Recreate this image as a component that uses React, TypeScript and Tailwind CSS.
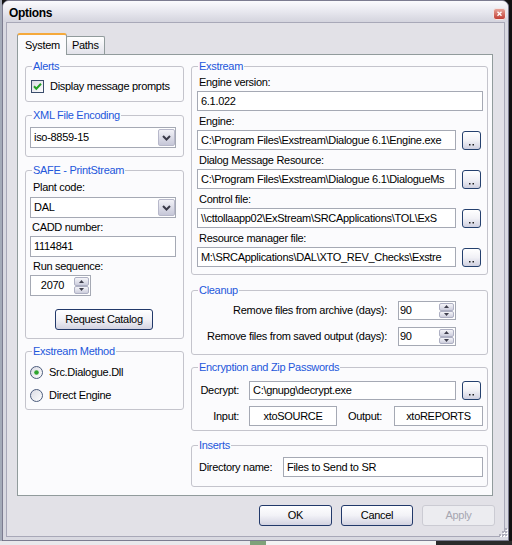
import React from "react";

const F =
  "font-['Liberation_Sans',Arial,sans-serif] text-[11px] tracking-[-0.3px] leading-[13px] text-black";

function Group({
  title,
  className = "",
  children,
}: {
  title: string;
  className?: string;
  children?: React.ReactNode;
}) {
  return (
    <div className={`relative border border-[#C4C4CC] rounded-[3px] ${className}`}>
      <span className="absolute left-[6px] -top-[7px] px-[1px] bg-[#FBFBFD] text-[#2457DB] leading-[13px] whitespace-nowrap">
        {title}
      </span>
      {children}
    </div>
  );
}

function TextBox({
  value,
  className = "",
  center = false,
}: {
  value: string;
  className?: string;
  center?: boolean;
}) {
  return (
    <div
      className={`border border-[#A5A9B4] bg-white flex items-center px-[3px] overflow-hidden whitespace-nowrap ${
        center ? "justify-center" : ""
      } ${className}`}
    >
      {value}
    </div>
  );
}

function Browse() {
  return (
    <div className="w-[19px] h-[19px] shrink-0 rounded-[3px] border border-[#24406E] bg-gradient-to-b from-white via-[#F1F1F6] to-[#CFD0E0] flex items-end justify-center pb-[3px]">
      <svg width="6" height="2" viewBox="0 0 6 2">
        <rect x="0" y="0" width="1.5" height="1.5" fill="#222" />
        <rect x="3.5" y="0" width="1.5" height="1.5" fill="#222" />
      </svg>
    </div>
  );
}

function Combo({ value }: { value: string }) {
  return (
    <div className="h-[21px] w-[146px] border border-[#A5A9B4] bg-white flex items-center">
      <span className="flex-1 pl-[3px] whitespace-nowrap overflow-hidden">{value}</span>
      <div className="w-[17px] h-[17px] rounded-[2px] border border-[#B7B8CA] bg-gradient-to-b from-[#F2F2F7] to-[#C6C7D8] flex items-center justify-center">
        <svg width="9" height="6" viewBox="0 0 9 6">
          <path d="M1 1 L4.5 4.5 L8 1" stroke="#3A3A48" strokeWidth="2" fill="none" />
        </svg>
      </div>
    </div>
  );
}

function SpinBtn({ up = false }: { up?: boolean }) {
  return (
    <div className="flex-1 w-[15px] border border-[#AEB0C3] rounded-[2px] bg-gradient-to-b from-[#F5F5F9] to-[#CDCEDD] flex items-center justify-center">
      <svg width="5" height="3" viewBox="0 0 5 3">
        {up ? (
          <path d="M0 3 L2.5 0 L5 3 Z" fill="#3E3E4C" />
        ) : (
          <path d="M0 0 L2.5 3 L5 0 Z" fill="#3E3E4C" />
        )}
      </svg>
    </div>
  );
}

function Spin({
  value,
  className = "",
  center = false,
}: {
  value: string;
  className?: string;
  center?: boolean;
}) {
  return (
    <div className={`flex border border-[#A5A9B4] bg-white ${className}`}>
      <div className={`flex-1 flex items-center ${center ? "justify-center" : "pl-[1px]"}`}>
        {value}
      </div>
      <div className="flex flex-col py-[1px] pr-[1px]">
        <SpinBtn up />
        <SpinBtn />
      </div>
    </div>
  );
}

function Button({
  label,
  className = "",
  disabled = false,
}: {
  label: string;
  className?: string;
  disabled?: boolean;
}) {
  return (
    <div
      className={`h-[21px] rounded-[3px] border flex items-center justify-center ${
        disabled
          ? "border-[#CBCBD3] bg-[#ECECF0] text-[#A6A6B0]"
          : "border-[#22396A] bg-gradient-to-b from-white via-[#F2F2F7] to-[#D3D3E1]"
      } ${className}`}
    >
      {label}
    </div>
  );
}

function Checkbox() {
  return (
    <svg width="13" height="13" viewBox="0 0 13 13" className="shrink-0">
      <defs>
        <linearGradient id="cbg" x1="0" y1="0" x2="1" y2="1">
          <stop offset="0" stopColor="#D8D9E2" />
          <stop offset="1" stopColor="#FFFFFF" />
        </linearGradient>
      </defs>
      <rect x="0.5" y="0.5" width="12" height="12" fill="url(#cbg)" stroke="#3B4D6C" />
      <path d="M3 6.3 L5.3 8.7 L10 3.8" stroke="#22A022" strokeWidth="2" fill="none" />
    </svg>
  );
}

function Radio({ selected = false }: { selected?: boolean }) {
  return (
    <svg width="13" height="13" viewBox="0 0 13 13" className="shrink-0">
      <defs>
        <linearGradient id="rbg" x1="0" y1="0" x2="1" y2="1">
          <stop offset="0" stopColor="#D9DAE3" />
          <stop offset="1" stopColor="#FFFFFF" />
        </linearGradient>
      </defs>
      <circle cx="6.5" cy="6.5" r="6" fill="url(#rbg)" stroke="#4C5C7C" />
      {selected && <circle cx="6.5" cy="6.5" r="2.3" fill="#2EA52E" />}
    </svg>
  );
}

function CloseBtn() {
  return (
    <svg width="13" height="12" viewBox="0 0 13 12">
      <defs>
        <linearGradient id="clg" x1="0" y1="0" x2="0" y2="1">
          <stop offset="0" stopColor="#E9A79C" />
          <stop offset="1" stopColor="#C0392F" />
        </linearGradient>
      </defs>
      <rect x="0.5" y="0.5" width="12" height="11" rx="2.5" fill="url(#clg)" stroke="#F2E6E6" />
      <path d="M4.5 3.8 L8.5 7.8 M8.5 3.8 L4.5 7.8" stroke="#FFFFFF" strokeWidth="1.4" />
    </svg>
  );
}

function Grip() {
  const dots = [
    [7, 0],
    [4, 3],
    [7, 3],
    [1, 6],
    [4, 6],
    [7, 6],
  ];
  return (
    <svg width="10" height="10" viewBox="0 0 10 10">
      {dots.map(([x, y], i) => (
        <g key={i}>
          <rect x={x + 1} y={y + 1} width="2" height="2" fill="#FFFFFF" />
          <rect x={x} y={y} width="2" height="2" fill="#AFAFBB" />
        </g>
      ))}
    </svg>
  );
}

function Label({ children, className = "" }: { children: React.ReactNode; className?: string }) {
  return <div className={`h-[13px] whitespace-nowrap ${className}`}>{children}</div>;
}

export default function App() {
  return (
    <div className={`w-[512px] h-[545px] bg-[#141414] flex flex-col overflow-hidden ${F}`}>
      <div className="flex h-[541px] shrink-0">
        <div className="w-[2px] bg-[#A4AAB8]" />
        <div className="relative w-[507px] h-[541px] border border-[#7C7C90] rounded-t-[7px] bg-[#D9D9E1] flex flex-col">
          {/* Title bar */}
          <div className="h-[21px] shrink-0 rounded-t-[6px] bg-gradient-to-b from-[#FBFBFD] via-[#E8E8EF] to-[#D4D4DE] flex items-center justify-between pt-[4px] pl-[6px] pr-[2px]">
            <span className="font-bold text-[12px] tracking-[-0.3px]">Options</span>
            <CloseBtn />
          </div>

          {/* Client area */}
          <div className="mx-[3px] h-[515px] shrink-0 border border-[#A8A8B8] bg-[#E2E1E7] flex flex-col pt-[10px]">
            {/* Tabs */}
            <div className="ml-[10px] flex items-end h-[21px]">
              <div className="relative z-10 -mb-px h-[22px] w-[50px] bg-[#FBFBFD] border-x border-[#919B9C] border-t-2 border-t-[#F5A93B] rounded-t-[3px] pl-[7px] flex items-center">
                System
              </div>
              <div className="h-[18px] w-[39px] -ml-px border border-b-0 border-[#919B9C] bg-gradient-to-b from-white to-[#E2E2EA] rounded-t-[2px] pl-[5px] flex items-center">
                Paths
              </div>
            </div>

            {/* Tab page */}
            <div className="ml-[10px] w-[476px] h-[442px] border border-[#919B9C] bg-[#FBFBFD] flex pl-[7px]">
              {/* Left column */}
              <div className="w-[159px] flex flex-col">
                <Group title="Alerts" className="mt-[11px] h-[36px]">
                  <div className="pt-[13px] pl-[5px] flex items-center gap-[6px] h-[13px] box-content">
                    <Checkbox />
                    <span className="whitespace-nowrap">Display message prompts</span>
                  </div>
                </Group>

                <Group title="XML File Encoding" className="mt-[13px] h-[42px]">
                  <div className="pt-[11px] pl-[4px]">
                    <Combo value="iso-8859-15" />
                  </div>
                </Group>

                <Group title="SAFE - PrintStream" className="mt-[13px] h-[169px]">
                  <div className="pt-[10px] pl-[4px] flex flex-col">
                    <Label className="ml-[3px]">Plant code:</Label>
                    <div className="mt-[3px]">
                      <Combo value="DAL" />
                    </div>
                    <Label className="mt-[3px] ml-[2px]">CADD number:</Label>
                    <TextBox value="1114841" className="mt-[2px] h-[21px] w-[146px]" />
                    <Label className="mt-[3px] ml-[3px]">Run sequence:</Label>
                    <Spin value="2070" center className="mt-[2px] h-[21px] w-[61px]" />
                    <Button label="Request Catalog" className="mt-[13px] ml-[25px] w-[98px]" />
                  </div>
                </Group>

                <Group title="Exstream Method" className="mt-[12px] h-[59px]">
                  <div className="pt-[14px] pl-[4px] flex flex-col">
                    <div className="h-[13px] flex items-center gap-[6px]">
                      <Radio selected />
                      <span>Src.Dialogue.Dll</span>
                    </div>
                    <div className="mt-[10px] h-[13px] flex items-center gap-[6px]">
                      <Radio />
                      <span>Direct Engine</span>
                    </div>
                  </div>
                </Group>
              </div>

              {/* Right column */}
              <div className="ml-[7px] w-[297px] flex flex-col">
                <Group title="Exstream" className="mt-[11px] h-[209px]">
                  <div className="pt-[9px] pl-[5px] pr-[4px] flex flex-col">
                    <Label className="ml-[2px]">Engine version:</Label>
                    <TextBox value="6.1.022" className="mt-[2px] h-[20px]" />
                    <Label className="mt-[4px] ml-[2px]">Engine:</Label>
                    <div className="mt-[2px] flex items-center gap-[6px]">
                      <TextBox
                        value="C:\Program Files\Exstream\Dialogue 6.1\Engine.exe"
                        className="h-[20px] w-[259px]"
                      />
                      <Browse />
                    </div>
                    <Label className="mt-[4px] ml-[2px]">Dialog Message Resource:</Label>
                    <div className="mt-[2px] flex items-center gap-[6px]">
                      <TextBox
                        value="C:\Program Files\Exstream\Dialogue 6.1\DialogueMs"
                        className="h-[20px] w-[259px]"
                      />
                      <Browse />
                    </div>
                    <Label className="mt-[4px] ml-[2px]">Control file:</Label>
                    <div className="mt-[2px] flex items-center gap-[6px]">
                      <TextBox
                        value="\\cttollaapp02\ExStream\SRCApplications\TOL\ExS"
                        className="h-[20px] w-[259px]"
                      />
                      <Browse />
                    </div>
                    <Label className="mt-[4px] ml-[2px]">Resource manager file:</Label>
                    <div className="mt-[2px] flex items-center gap-[6px]">
                      <TextBox
                        value="M:\SRCApplications\DAL\XTO_REV_Checks\Exstre"
                        className="h-[20px] w-[259px]"
                      />
                      <Browse />
                    </div>
                  </div>
                </Group>

                <Group title="Cleanup" className="mt-[15px] h-[65px]">
                  <div className="pt-[10px] pr-[31px] flex flex-col items-end">
                    <div className="flex items-center">
                      <span className="whitespace-nowrap">Remove files from archive (days):</span>
                      <Spin value="90" className="ml-[11px] h-[19px] w-[58px]" />
                    </div>
                    <div className="mt-[7px] flex items-center">
                      <span className="whitespace-nowrap">Remove files from saved output (days):</span>
                      <Spin value="90" className="ml-[11px] h-[19px] w-[58px]" />
                    </div>
                  </div>
                </Group>

                <Group title="Encryption and Zip Passwords" className="mt-[12px] h-[64px]">
                  <div className="pt-[13px] flex flex-col">
                    <div className="flex items-center">
                      <span className="w-[47px] text-right whitespace-nowrap">Decrypt:</span>
                      <TextBox value="C:\gnupg\decrypt.exe" className="ml-[10px] h-[19px] w-[207px]" />
                      <div className="ml-[6px]">
                        <Browse />
                      </div>
                    </div>
                    <div className="mt-[6px] flex items-center">
                      <span className="w-[47px] text-right whitespace-nowrap">Input:</span>
                      <TextBox value="xtoSOURCE" center className="ml-[10px] h-[20px] w-[88px]" />
                      <span className="ml-[11px] w-[37px] whitespace-nowrap">Output:</span>
                      <TextBox value="xtoREPORTS" center className="ml-[9px] h-[20px] w-[89px]" />
                    </div>
                  </div>
                </Group>

                <Group title="Inserts" className="mt-[14px] h-[42px]">
                  <div className="pt-[11px] pl-[7px] pr-[4px] flex items-center">
                    <span className="flex-1 whitespace-nowrap">Directory name:</span>
                    <TextBox value="Files to Send to SR" className="h-[20px] w-[200px]" />
                  </div>
                </Group>
              </div>
            </div>

            {/* Dialog buttons */}
            <div className="mt-[9px] ml-[252px] flex gap-[9px]">
              <Button label="OK" className="w-[73px]" />
              <Button label="Cancel" className="w-[72px]" />
              <Button label="Apply" disabled className="w-[73px]" />
            </div>
          </div>

          <div className="absolute right-0 bottom-[2px]">
            <Grip />
          </div>
        </div>
        <div className="flex-1 bg-[#121212]" />
      </div>
      <div className="h-[4px] shrink-0 flex">
        <div className="w-[250px] bg-[#E9E9EC]" />
        <div className="w-[16px] bg-[#7FA27A]" />
        <div className="w-[170px] bg-[#F3F3F3]" />
        <div className="w-[76px] bg-[#2A2A2A]" />
      </div>
    </div>
  );
}
